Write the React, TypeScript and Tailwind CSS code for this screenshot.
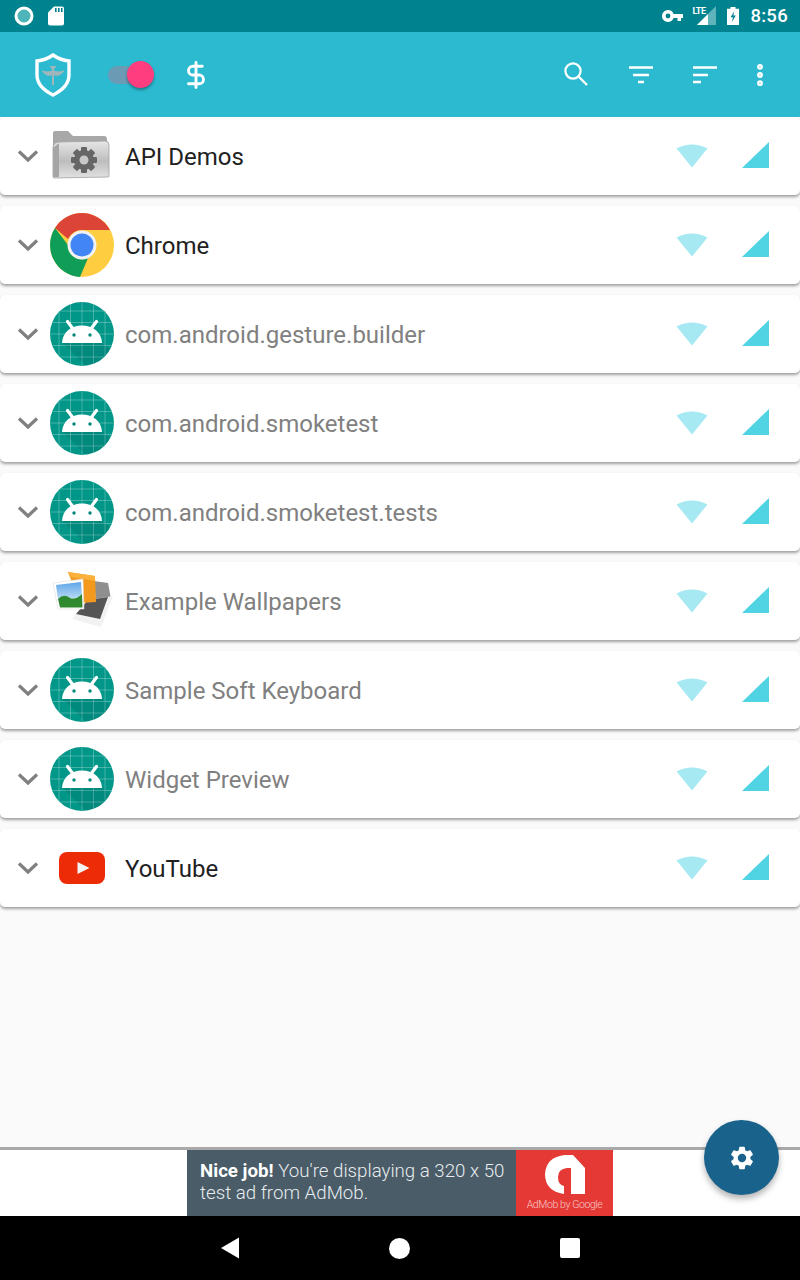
import { MoreVertical, DollarSign } from "lucide-react";

const FONT = "font-['Roboto','Liberation_Sans',sans-serif]";

function AndroidIcon() {
  const lines = [9, 20.5, 32, 43.5, 55];
  return (
    <svg width="64" height="64" viewBox="0 0 64 64">
      <defs>
        <clipPath id="androidClip">
          <circle cx="32" cy="32" r="32" />
        </clipPath>
      </defs>
      <circle cx="32" cy="32" r="32" fill="#009688" />
      <g clipPath="url(#androidClip)" stroke="#ffffff" strokeOpacity="0.35" strokeWidth="0.8">
        {lines.map((l) => (
          <g key={l}>
            <line x1={l} y1="0" x2={l} y2="64" />
            <line x1="0" y1={l} x2="64" y2={l} />
          </g>
        ))}
        <path d="M13 41 L36 64 L64 64 L64 50 L52 41 Z" fill="#000" fillOpacity="0.08" stroke="none" />
      </g>
      <path d="M12 41 C12.5 30 21 23.5 32 23.5 C43 23.5 51.5 30 52 41 Z" fill="#fff" />
      <path d="M17.5 19.5 L23.5 27.5 M46.5 19.5 L40.5 27.5" stroke="#fff" strokeWidth="3.2" strokeLinecap="round" />
      <circle cx="24" cy="33" r="1.7" fill="#00897b" />
      <circle cx="40" cy="33" r="1.7" fill="#00897b" />
    </svg>
  );
}

function ChromeIcon() {
  return (
    <svg width="64" height="64" viewBox="0 0 64 64">
      <circle cx="32" cy="32" r="32" fill="#ffcd40" />
      <path d="M32 0 A32 32 0 0 1 60 17 L32 17 A15 15 0 0 0 18 26 L5 15 A32 32 0 0 1 32 0 Z" fill="#db4437" />
      <path d="M5 15 L18 32 A14 14 0 0 0 38 45 L30 64 A32 32 0 0 1 5 15 Z" fill="#0f9d58" />
      <circle cx="32" cy="32" r="14.5" fill="#f1f1f1" />
      <circle cx="32" cy="32" r="11.5" fill="#4285f4" />
    </svg>
  );
}

function FolderIcon() {
  return (
    <svg width="60" height="52" viewBox="0 0 60 52">
      <defs>
        <linearGradient id="folderFront" x1="0" y1="0" x2="0" y2="1">
          <stop offset="0" stopColor="#e6e6e6" />
          <stop offset="0.55" stopColor="#bdbdbd" />
          <stop offset="1" stopColor="#e2e2e2" />
        </linearGradient>
      </defs>
      <path d="M1 3 Q1 1 3 1 L16 1 L21 6 L52 6 Q55 6 55 9 L55 16 L1 30 Z" fill="#a8a8a8" />
      <path d="M2 48 Q1 48 1 46 L1 18 Q1 13 6 12 L53 11 Q57 11 57 15 L57 46 Q57 47 56 47 Z" fill="url(#folderFront)" stroke="#a0a0a0" strokeWidth="0.8" />
      <path d="M1 18 L7 13 L7 47 L1 47 Z" fill="#a5a5a5" />
      <g transform="translate(32 30)">
        {[0, 45, 90, 135].map((r) => (
          <rect key={r} x="-3" y="-13" width="6" height="26" rx="1" fill="#666666" transform={`rotate(${r})`} />
        ))}
        <circle r="10" fill="#666666" />
        <circle r="4.5" fill="#c8c8c8" />
      </g>
    </svg>
  );
}

function WallpapersIcon() {
  return (
    <svg width="64" height="64" viewBox="0 0 64 64">
      <defs>
        <linearGradient id="sky" x1="0" y1="0" x2="0" y2="1">
          <stop offset="0" stopColor="#5fa4e8" />
          <stop offset="1" stopColor="#bfe0f5" />
        </linearGradient>
      </defs>
      <path d="M44 12 L58 14 L61 30 L46 34 Z" fill="#8f8f8f" />
      <path d="M22 50 L51 58 L63 27 L38 31 Z" fill="#f2f2f2" />
      <path d="M26 45 L50 50 L58 28 L38 31 Z" fill="#555555" />
      <path d="M18 3 L45 7 L46 33 L30 34 Z" fill="#f39a1e" />
      <path d="M18 3 L45 7 L45 12 L20 8 Z" fill="#fbb13c" />
      <path d="M3 14 L33 10 L34 40 L8 40 Z" fill="#ffffff" stroke="#dcdcdc" strokeWidth="0.6" />
      <path d="M6 16 L31 13 L32 28 L8 31 Z" fill="url(#sky)" />
      <path d="M8 30 Q14 24 20 29 Q26 31 32 25 L32.5 38.5 L10 38.5 Z" fill="#2f8a2f" />
    </svg>
  );
}

function YouTubeIcon() {
  return (
    <svg width="46" height="32" viewBox="0 0 46 32">
      <rect x="0" y="0" width="46" height="32" rx="8" fill="#ee2b07" />
      <path d="M18.5 10 L30.5 16 L18.5 22 Z" fill="#f3f3f3" />
    </svg>
  );
}

function Row({ name, icon, dim }: { name: string; icon: React.ReactNode; dim?: boolean }) {
  return (
    <div className="flex h-[78px] items-center rounded-[5px] bg-white pl-[17px] pr-[31px] shadow-[0_2px_3px_rgba(0,0,0,0.36)]">
      <svg width="22" height="14" viewBox="0 0 22 14" className="shrink-0">
        <path d="M2 2.5 L11 11 L20 2.5" fill="none" stroke="#808080" strokeWidth="3.2" />
      </svg>
      <div className="ml-[11px] flex w-[64px] shrink-0 items-center justify-center">{icon}</div>
      <span className={`ml-[11px] flex-1 pt-[2px] text-[24px] ${dim ? "text-[#808080]" : "text-[#212121]"}`}>{name}</span>
      <svg width="32" height="26" viewBox="0 0 32 26" className="mb-[3px] shrink-0">
        <path d="M0.5 6.5 Q16 -1.5 31.5 6.5 L16 25.5 Z" fill="#a6e9f2" />
      </svg>
      <svg width="27" height="26" viewBox="0 0 27 26" className="mb-[3px] ml-[34px] shrink-0">
        <path d="M0 26 L27 0 L27 26 Z" fill="#50d4e4" />
      </svg>
    </div>
  );
}

const rows = [
  { name: "API Demos", icon: <FolderIcon /> },
  { name: "Chrome", icon: <ChromeIcon /> },
  { name: "com.android.gesture.builder", icon: <AndroidIcon />, dim: true },
  { name: "com.android.smoketest", icon: <AndroidIcon />, dim: true },
  { name: "com.android.smoketest.tests", icon: <AndroidIcon />, dim: true },
  { name: "Example Wallpapers", icon: <WallpapersIcon />, dim: true },
  { name: "Sample Soft Keyboard", icon: <AndroidIcon />, dim: true },
  { name: "Widget Preview", icon: <AndroidIcon />, dim: true },
  { name: "YouTube", icon: <YouTubeIcon /> },
];

export default function App() {
  return (
    <div className={`relative flex h-[1280px] w-[800px] flex-col overflow-hidden bg-[#fafafa] ${FONT}`}>
      {/* status bar */}
      <div className="flex h-8 shrink-0 items-center bg-[#00838f] pl-[14px] pr-[12px] text-white">
        <svg width="20" height="20" viewBox="0 0 20 20">
          <circle cx="10" cy="10" r="8" fill="#4db5b8" stroke="#fff" strokeWidth="3" />
        </svg>
        <svg width="16" height="20" viewBox="0 0 16 20" className="ml-[14px]">
          <path d="M6 0.5 L14 0.5 Q16 0.5 16 2.5 L16 17.5 Q16 19.5 14 19.5 L2 19.5 Q0 19.5 0 17.5 L0 6.5 Z" fill="#fff" />
          <path d="M7 2 h1.6 v4 h-1.6 z M10 2 h1.6 v4 h-1.6 z M13 2 h1.6 v4 h-1.6 z" fill="#00838f" />
        </svg>
        <div className="flex-1" />
        <svg width="21" height="12" viewBox="0 0 21 12">
          <path d="M6 0 A6 6 0 0 1 11.6 4 L21 4 L21 8 L19 8 L19 11 L15.5 11 L15.5 8 L11.6 8 A6 6 0 1 1 6 0 Z" fill="#fff" fillRule="evenodd" />
          <circle cx="6" cy="6" r="2.4" fill="#00838f" />
        </svg>
        <div className="relative ml-[7px] h-[20px] w-[26px]">
          <svg width="19" height="19" viewBox="0 0 19 19" className="absolute bottom-[1px] right-0">
            <path d="M0 19 L19 0 L19 19 Z" fill="#5fb4bb" />
            <path d="M0 19 L11 8 L11 19 Z" fill="#fff" />
          </svg>
          <span className="absolute left-[2px] top-[-1px] text-[9px] font-bold leading-[12px] tracking-[-0.4px]">LTE</span>
        </div>
        <svg width="12" height="18" viewBox="0 0 12 20" preserveAspectRatio="none" className="ml-[11px]">
          <path d="M3.5 0 H8.5 V2 H12 V20 H0 V2 H3.5 Z" fill="#fff" />
          <path d="M7.5 4.5 L3.5 11.5 H6 L4.8 17 L8.8 9.5 H6.3 Z" fill="#00838f" />
        </svg>
        <span className="ml-[11px] text-[18.5px] font-medium leading-none tracking-[0.3px]">8:56</span>
      </div>

      {/* toolbar */}
      <div className="flex h-[85px] shrink-0 items-center bg-[#2cbad1] text-white">
        <svg width="36" height="44" viewBox="0 0 36 44" className="ml-[35px]">
          <path d="M18 2 Q25 7 34 8 L34 22 Q34 34 18 42 Q2 34 2 22 L2 8 Q11 7 18 2 Z" fill="none" stroke="#fff" strokeWidth="3.4" />
          <path d="M18 13 V32" stroke="#9fb6ba" strokeWidth="2" />
          <path d="M7 18 Q13 25 18 21 Q23 25 29 18 Q24 20 18 18 Q12 20 7 18 Z M15 13 L18 17 L21 13" fill="#9fb6ba" stroke="#9fb6ba" strokeWidth="1" />
        </svg>
        {/* switch */}
        <div className="relative ml-[37px] h-[18px] w-[46px]">
          <div className="h-[18px] w-[40px] rounded-full bg-[#6b9ab5]" />
          <div className="absolute left-[19px] top-[-5px] h-[27px] w-[27px] rounded-full bg-[#ff3d7f] shadow-[0_2px_3px_rgba(0,0,0,0.35)]" />
        </div>
        <DollarSign size={30} strokeWidth={2.3} className="ml-[27px]" />
        <div className="flex-1" />
        {/* search */}
        <svg width="24" height="24" viewBox="0 0 24 24" className="mb-[2px] mr-[40px]">
          <circle cx="9" cy="9" r="7.6" fill="none" stroke="#fff" strokeWidth="2.2" />
          <path d="M14.5 14.5 L23 23" stroke="#fff" strokeWidth="2.4" />
        </svg>
        <svg width="26" height="20" viewBox="0 0 26 20" className="mr-[38px]">
          <path d="M1 2.5 H25 M5 10 H21 M10 17 H16" stroke="#fff" strokeWidth="2.6" />
        </svg>
        <svg width="26" height="20" viewBox="0 0 26 20" className="mr-[28px]">
          <path d="M1 2.5 H25 M1 10 H16 M1 17 H9" stroke="#fff" strokeWidth="2.6" />
        </svg>
        <MoreVertical size={28} strokeWidth={3} className="mr-[26px]" />
      </div>

      {/* app list */}
      <div className="flex flex-1 flex-col gap-[11px]">
        {rows.map((r) => (
          <Row key={r.name} name={r.name} icon={r.icon} dim={r.dim} />
        ))}
      </div>

      {/* ad banner */}
      <div className="flex h-[69px] shrink-0 justify-center border-t-[3px] border-[#a9a9a9] bg-white">
        <div className="flex h-[66px] w-[426px]">
          <div className="flex-1 whitespace-nowrap bg-[#4a5c68] pl-[13px] pt-[10px] text-[18.7px] font-light leading-[22px] text-[#e8ecee]">
            <b className="font-bold text-white">Nice job!</b> You're displaying a 320 x 50
            <br />
            test ad from AdMob.
          </div>
          <div className="flex w-[97px] flex-col items-center bg-[#e53935] pt-[5px]">
            <svg width="40" height="39" viewBox="0 0 40 39">
              <path d="M20 0 H28 L40 13 V39 H26 V13 H22 Q13 14 13 22 Q13 30 19 31 V39 Q0 36 0 19 Q1 2 20 0 Z" fill="#fff" />
            </svg>
            <span className="mt-[4px] whitespace-nowrap text-[10.5px] font-light leading-[14px] tracking-[-0.4px] text-[#f8c9c7]">AdMob by Google</span>
          </div>
        </div>
      </div>

      {/* nav bar */}
      <div className="relative flex h-16 shrink-0 items-center bg-black">
        <svg width="20" height="22" viewBox="0 0 20 22" className="ml-[220px]">
          <path d="M19 0.5 V21.5 L1 11 Z" fill="#fff" />
        </svg>
        <div className="ml-[149px] h-[21px] w-[21px] rounded-full bg-white" />
        <div className="ml-[150px] h-[20px] w-[20px] rounded-[2px] bg-white" />
      </div>

      {/* settings fab */}
      <button className="absolute left-[704px] top-[1120px] flex h-[75px] w-[75px] items-center justify-center rounded-full bg-[#18628c] shadow-[0_4px_6px_rgba(0,0,0,0.3)]">
        <svg width="28" height="28" viewBox="0 0 24 24">
          <path
            fill="#fff"
            d="M19.14 12.94c.04-.3.06-.61.06-.94s-.02-.64-.07-.94l2.03-1.58a.49.49 0 0 0 .12-.61l-1.92-3.32a.49.49 0 0 0-.59-.22l-2.39.96a7 7 0 0 0-1.62-.94l-.36-2.54a.48.48 0 0 0-.48-.41h-3.84a.48.48 0 0 0-.47.41l-.36 2.54c-.59.24-1.13.57-1.62.94l-2.39-.96a.49.49 0 0 0-.59.22L2.74 8.87a.48.48 0 0 0 .12.61l2.03 1.58c-.05.3-.09.63-.09.94s.02.64.07.94l-2.03 1.58a.49.49 0 0 0-.12.61l1.92 3.32c.12.22.37.29.59.22l2.39-.96c.5.38 1.03.7 1.62.94l.36 2.54c.05.24.24.41.48.41h3.84c.24 0 .44-.17.47-.41l.36-2.54c.59-.24 1.13-.56 1.62-.94l2.39.96c.22.08.47 0 .59-.22l1.92-3.32a.47.47 0 0 0-.12-.61l-2.01-1.58zM12 15.6A3.6 3.6 0 1 1 12 8.4a3.6 3.6 0 0 1 0 7.2z"
          />
        </svg>
      </button>
    </div>
  );
}
